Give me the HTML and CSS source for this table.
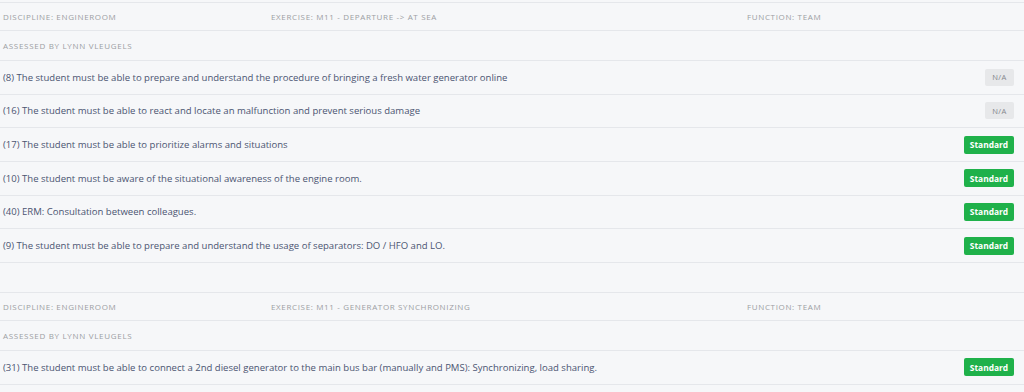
FILE: index.html
```html
<!DOCTYPE html>
<html>
<head>
<meta charset="utf-8">
<link rel="stylesheet" href="styles.css">
</head>
<body>
<div class="page">
  <section class="block">
    <div class="row head">
      <span>Discipline: Engineroom</span>
      <span>Exercise: M11 - Departure -&gt; At sea</span>
      <span>Function: Team</span>
    </div>
    <div class="row assessed"><span>Assessed by Lynn Vleugels</span></div>
    <div class="row item"><span class="txt">(8) The student must be able to prepare and understand the procedure of bringing a fresh water generator online</span><span class="badge na">N/A</span></div>
    <div class="row item"><span class="txt">(16) The student must be able to react and locate an malfunction and prevent serious damage</span><span class="badge na">N/A</span></div>
    <div class="row item"><span class="txt">(17) The student must be able to prioritize alarms and situations</span><span class="badge std">Standard</span></div>
    <div class="row item"><span class="txt">(10) The student must be aware of the situational awareness of the engine room.</span><span class="badge std">Standard</span></div>
    <div class="row item"><span class="txt">(40) ERM: Consultation between colleagues.</span><span class="badge std">Standard</span></div>
    <div class="row item"><span class="txt">(9) The student must be able to prepare and understand the usage of separators: DO / HFO and LO.</span><span class="badge std">Standard</span></div>
  </section>
  <section class="block second">
    <div class="row head">
      <span>Discipline: Engineroom</span>
      <span>Exercise: M11 - Generator synchronizing</span>
      <span>Function: Team</span>
    </div>
    <div class="row assessed"><span>Assessed by Lynn Vleugels</span></div>
    <div class="row item"><span class="txt">(31) The student must be able to connect a 2nd diesel generator to the main bus bar (manually and PMS): Synchronizing, load sharing.</span><span class="badge std">Standard</span></div>
  </section>
</div>
</body>
</html>
```

FILE: styles.css
```css
* { box-sizing: border-box; }
html, body { margin: 0; padding: 0; }
body {
  background: #f6f7f9;
  font-family: "Open Sans", Lato, sans-serif;
  width: 1024px;
  height: 392px;
  overflow: hidden;
}
.page { padding-top: 2px; }
.block { border-top: 1px solid #e5e7eb; }
.second { margin-top: 29px; }
.row {
  display: flex;
  align-items: center;
  border-bottom: 1px solid #e5e7eb;
  padding: 0 10px 0 3px;
}
.head {
  display: grid;
  grid-template-columns: 268px 476px 1fr;
  height: 28px;
  font-size: 8px;
  letter-spacing: 0.65px;
  text-transform: uppercase;
  color: #9c9ea3;
}
.assessed {
  height: 30px;
  font-size: 8px;
  letter-spacing: 0.7px;
  text-transform: uppercase;
  color: #9c9ea3;
}
.item {
  height: 33.667px;
  justify-content: space-between;
  font-size: 9.55px;
  color: #4b5572;
}
.badge {
  display: inline-flex;
  align-items: center;
  justify-content: center;
  border-radius: 2px;
  height: 18px;
}
.na {
  width: 29px;
  height: 17px;
  background: #e7e8ea;
  color: #85878c;
  font-size: 7.6px;
  letter-spacing: 0.4px;
}
.std {
  width: 50px;
  background: #1fb14a;
  color: #fff;
  font-size: 8.4px;
  font-weight: 700;
}
```
